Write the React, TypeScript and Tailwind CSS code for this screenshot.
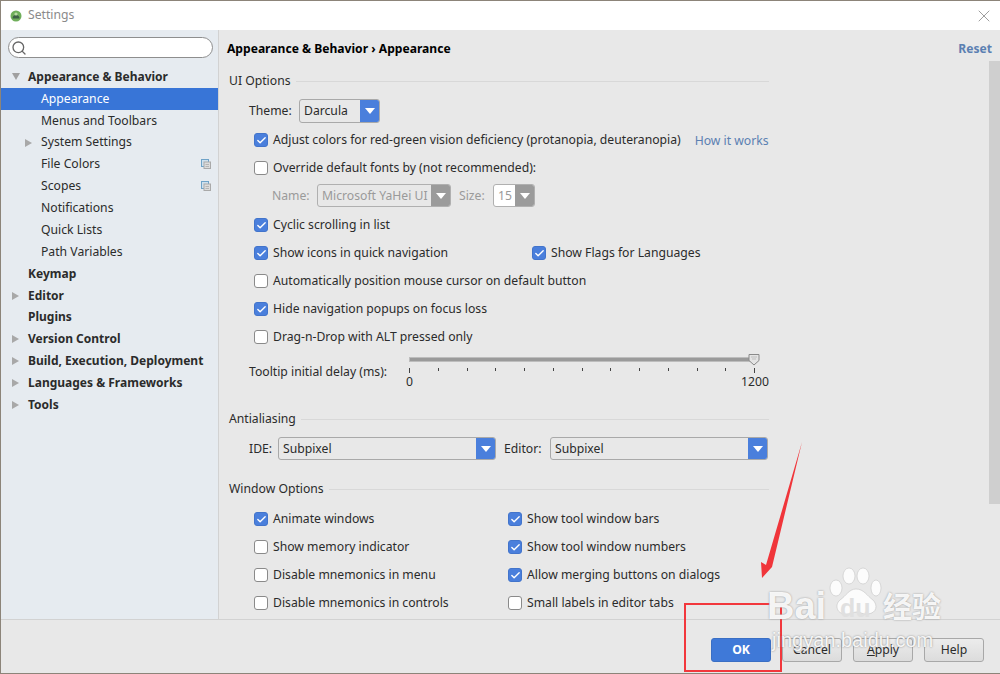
import React from 'react';
import { Search, Check, X } from 'lucide-react';

const tree = [
  { label: 'Appearance & Behavior', bold: true, arrow: 'down', indent: 28 },
  { label: 'Appearance', selected: true, indent: 41 },
  { label: 'Menus and Toolbars', indent: 41 },
  { label: 'System Settings', arrow: 'right', indent: 41 },
  { label: 'File Colors', copy: true, indent: 41 },
  { label: 'Scopes', copy: true, indent: 41 },
  { label: 'Notifications', indent: 41 },
  { label: 'Quick Lists', indent: 41 },
  { label: 'Path Variables', indent: 41 },
  { label: 'Keymap', bold: true, indent: 28 },
  { label: 'Editor', bold: true, arrow: 'right', indent: 28 },
  { label: 'Plugins', bold: true, indent: 28 },
  { label: 'Version Control', bold: true, arrow: 'right', indent: 28 },
  { label: 'Build, Execution, Deployment', bold: true, arrow: 'right', indent: 28 },
  { label: 'Languages & Frameworks', bold: true, arrow: 'right', indent: 28 },
  { label: 'Tools', bold: true, arrow: 'right', indent: 28 },
];

function TreeRow({ item }: { item: any }) {
  return (
    <div className={item.selected ? 'relative flex items-center h-[21.87px] bg-[#3875d7] text-white' : 'relative flex items-center h-[21.87px] text-[#2b2b2b]'} style={{ paddingLeft: item.indent - 1 }}>
      {item.arrow === 'down' && <div className="absolute left-[11px] top-[7px] w-0 h-0 border-l-[4px] border-r-[4px] border-t-[7px] border-l-transparent border-r-transparent border-t-[#a0a0a0]" />}
      {item.arrow === 'right' && <div className="absolute w-0 h-0 border-t-[4px] border-b-[4px] border-l-[7px] border-t-transparent border-b-transparent border-l-[#a8a8a8]" style={{ left: item.indent === 41 ? 24 : 11, top: 7 }} />}
      <span className={item.bold ? 'font-bold text-[12px]' : ''}>{item.label}</span>
      {item.copy && <CopyIcon />}
    </div>
  );
}

function CopyIcon() {
  return (
    <svg className="absolute left-[200px] top-[6px]" width="10" height="10" viewBox="0 0 10 10" fill="none">
      <rect x="0.5" y="0.5" width="7" height="7" fill="#cfe1ee" stroke="#6fa3c8" />
      <rect x="3" y="3" width="6.5" height="6.5" fill="#dcdcdc" stroke="#a9a9a9" />
      <path d="M4.500 5.500h3.500M4.500 7.500h3.500" stroke="#b5b5b5" />
    </svg>
  );
}

function Box({ on }: { on?: boolean }) {
  return on ? (
    <span className="flex items-center justify-center w-[14px] h-[14px] shrink-0 rounded-[3px] bg-[#4a7fdc] border border-[#4274cb]">
      <Check size={11} strokeWidth={3} className="text-white" />
    </span>
  ) : (
    <span className="block w-[14px] h-[14px] shrink-0 rounded-[3px] bg-white border border-[#8a8a8a]" />
  );
}

function CheckRow({ on, label, className = '' }: { on?: boolean; label: string; className?: string }) {
  return (
    <div className={'flex items-center gap-[5px] h-[20px] ' + className}>
      <Box on={on} />
      <span className="mt-px">{label}</span>
    </div>
  );
}

function Combo({ value, w, h = 'h-[23px]', gray, white }: { value: string; w: string; h?: string; gray?: boolean; white?: boolean }) {
  return (
    <div className={'flex overflow-hidden rounded-[3px] border ' + w + ' ' + h + (gray ? ' border-[#b0b0b0]' : ' border-[#a9a9a9]') + (white ? ' bg-white' : '')}>
      <span className={'flex-1 pl-[4px] leading-[22px] whitespace-nowrap overflow-hidden ' + (gray ? 'text-[#9a9a9a]' : 'text-[#2b2b2b]')}>{value}</span>
      <span className={'flex items-center justify-center w-[19px] shrink-0 ' + (gray ? 'bg-[#9b9b9b]' : 'bg-[#4a7fdc]')}>
        <span className="w-0 h-0 border-l-[5px] border-r-[5px] border-t-[6px] border-l-transparent border-r-transparent border-t-white" />
      </span>
    </div>
  );
}

function GroupTitle({ title, className = '' }: { title: string; className?: string }) {
  return (
    <div className={'flex items-center gap-[5px] h-[20px] ' + className}>
      <span className="mt-px">{title}</span>
      <div className="flex-1 h-px bg-[#d8d8d8]" />
    </div>
  );
}

function Btn({ children, primary }: { children: React.ReactNode; primary?: boolean }) {
  return (
    <div className={primary
      ? 'flex items-center justify-center w-[60px] h-[24px] rounded-[3px] bg-[#3f79d8] border border-[#3a6fc4] text-white font-bold'
      : 'flex items-center justify-center w-[60px] h-[24px] rounded-[3px] bg-gradient-to-b from-[#ececec] to-[#dcdcdc] border border-[#a8a8a8] text-[#2b2b2b]'}>
      {children}
    </div>
  );
}

function Slider() {
  const ticks = Array.from({ length: 13 });
  return (
    <div className="relative w-[360px] h-[40px]">
      <div className="absolute left-0 top-[4px] w-[345px] h-[5px] bg-[#9a9a9a] border border-[#bdbdbd]" />
      <svg className="absolute left-[339px] top-0" width="12" height="13" viewBox="0 0 12 13">
        <path d="M1 1.500h10v6l-5 4.500-5-4.500z" fill="#e4e4e4" stroke="#8a8a8a" />
        <path d="M3.500 4h1M5.500 4h1M7.500 4h1M4.500 6h1M6.500 6h1" stroke="#9a9a9a" />
      </svg>
      <div className="absolute left-0 top-[15px] w-[346px] flex justify-between">
        {ticks.map((_, i) => (
          <div key={i} className={i === 0 || i === 12 ? 'w-px h-[5px] bg-[#444]' : 'w-px h-[3px] bg-[#444]'} />
        ))}
      </div>
      <span className="absolute left-[-3px] top-[20px] leading-[18px]">0</span>
      <span className="absolute left-[332px] top-[20px] leading-[18px]">1200</span>
    </div>
  );
}

function Overlays() {
  return (
    <>
      <svg className="absolute left-[750px] top-[435px]" width="60" height="150" viewBox="0 0 60 150">
        <path d="M52 7 L22 132 L12 143 L11 127 L16 130 Z" fill="#f0353a" />
      </svg>
      <div className="absolute left-[684px] top-[603px] w-[98px] h-[69px] border-[2px] border-[#f2373c]" />
      <svg className="absolute left-[826px] top-[566px]" width="58" height="58" viewBox="0 0 58 58" fill="#ffffff" fillOpacity="0.85" stroke="#c4c4c4" strokeWidth="0.6">
        <ellipse cx="10" cy="22" rx="6" ry="8" />
        <ellipse cx="23" cy="10" rx="6" ry="8" />
        <ellipse cx="37" cy="10" rx="6" ry="8" />
        <ellipse cx="50" cy="22" rx="5" ry="8" />
        <path d="M30 23c-7 0-10 7-16 11-6 5-3 15 7 14 5 0 6-2 10-2s6 3 11 2c9-1 10-9 5-14-6-4-9-11-17-11z" />
      </svg>
      <span className="absolute left-[767px] top-[584px] text-[38px] leading-[44px] font-bold text-white/90 [text-shadow:0_0_2px_#8f8f8f] font-['Liberation_Sans',sans-serif]">Bai</span>
      <span className="absolute left-[840px] top-[593px] text-[25px] leading-[30px] font-bold text-[#e0e0e0] font-['Liberation_Sans',sans-serif]">du</span>
      <span className="absolute left-[883px] top-[587px] text-[29px] leading-[36px] font-bold text-white/90 [text-shadow:0_0_2px_#8f8f8f] font-['Noto_Sans_CJK_SC',sans-serif]">经验</span>
      <span className="absolute left-[772px] top-[628px] text-[20px] leading-[24px] text-white/90 [text-shadow:0_0_2px_#7f7f7f] font-['Liberation_Sans',sans-serif]">jingyan.baidu.com</span>
    </>
  );
}

export default function App() {
  return (
    <div className="relative w-[1000px] h-[674px] overflow-hidden bg-[#8c8479] pl-px pt-px font-['Noto_Sans',sans-serif] text-[12.2px] text-[#2b2b2b]">
      <div className="flex flex-col h-[672px] w-[999px]">
        <div className="flex items-center h-[29px] bg-white shrink-0 pl-[9px]">
          <svg width="12" height="12" viewBox="0 0 12 12">
            <circle cx="6" cy="6" r="5.500" fill="#6fae5a" />
            <path d="M2.500 8.500a3.500 3.500 0 0 1 7 0z" fill="#3d5f45" />
            <circle cx="6" cy="4" r="1.600" fill="#b9d9a5" />
          </svg>
          <span className="ml-[6px] text-[#8a8a8a]">Settings</span>
          <X size={20} strokeWidth={1} className="ml-auto mr-[6px] text-[#8a8a8a]" />
        </div>
        <div className="flex flex-1 min-h-0">
          <div className="w-[218px] shrink-0 bg-[#e6ebf0] border-r border-[#d2d2d2] pt-[7px]">
            <div className="flex items-center mx-[7px] h-[21px] w-[205px] rounded-full bg-white border border-[#8e8e8e] pl-[2px]">
              <Search size={16} strokeWidth={2} className="text-[#666]" />
            </div>
            <div className="mt-[8px]">
              {tree.map((item) => <TreeRow key={item.label} item={item} />)}
            </div>
          </div>
          <div className="relative flex-1 bg-[#e8e8e8] pl-[10px] pr-[231px] pt-[9px]">
            <div className="-ml-[2px] h-[20px] leading-[20px] font-bold text-[12.1px] text-black whitespace-nowrap">
              Appearance &amp; Behavior › Appearance
            </div>
            <span className="absolute right-[8px] top-[9px] leading-[20px] font-bold text-[12.1px] text-[#5b80b2]">Reset</span>
            <div className="absolute right-0 top-[31px] w-[11px] h-[443px] bg-[#cfcfcf]" />

            <GroupTitle title="UI Options" className="mt-[12px]" />
            <div className="pl-[20px]">
              <div className="flex items-center h-[24px] mt-[8px]">
                <span className="w-[50px] mt-px">Theme:</span>
                <Combo value="Darcula" w="w-[81px]" h="h-[24px]" />
              </div>
              <div className="mt-[7px] pl-[5px]">
                <div className="flex items-center h-[20px] whitespace-nowrap">
                  <CheckRow on label="Adjust colors for red-green vision deficiency (protanopia, deuteranopia)" />
                  <span className="ml-[14px] mt-px leading-[18px] text-[#5b80b2]">How it works</span>
                </div>
                <CheckRow label="Override default fonts by (not recommended):" className="mt-[8px]" />
                <div className="flex items-center h-[23px] mt-[6px] pl-[18px] text-[#9a9a9a]">
                  <span className="w-[45px] mt-px">Name:</span>
                  <Combo value="Microsoft YaHei UI" w="w-[134px]" gray />
                  <span className="ml-[8px] w-[34px] mt-px">Size:</span>
                  <Combo value="15" w="w-[42px]" gray white />
                </div>
                <CheckRow on label="Cyclic scrolling in list" className="mt-[8px]" />
                <div className="flex mt-[8px] whitespace-nowrap">
                  <CheckRow on label="Show icons in quick navigation" className="w-[278px]" />
                  <CheckRow on label="Show Flags for Languages" />
                </div>
                <CheckRow label="Automatically position mouse cursor on default button" className="mt-[8px]" />
                <CheckRow on label="Hide navigation popups on focus loss" className="mt-[8px]" />
                <CheckRow label="Drag-n-Drop with ALT pressed only" className="mt-[8px]" />
              </div>
              <div className="flex mt-[6px]">
                <span className="w-[160px] pt-[9px] leading-[20px]">Tooltip initial delay (ms):</span>
                <Slider />
              </div>
            </div>

            <GroupTitle title="Antialiasing" className="mt-[16px]" />
            <div className="flex items-center pl-[20px] mt-[8px] h-[23px]">
              <span className="w-[29px] mt-px">IDE:</span>
              <Combo value="Subpixel" w="w-[218px]" />
              <span className="ml-[8px] w-[46px] mt-px">Editor:</span>
              <Combo value="Subpixel" w="w-[218px]" />
            </div>

            <GroupTitle title="Window Options" className="mt-[19px]" />
            <div className="grid grid-cols-[254px_254px] pl-[25px] mt-[10px] gap-y-[8px] whitespace-nowrap">
              <CheckRow on label="Animate windows" />
              <CheckRow on label="Show tool window bars" />
              <CheckRow label="Show memory indicator" />
              <CheckRow on label="Show tool window numbers" />
              <CheckRow label="Disable mnemonics in menu" />
              <CheckRow on label="Allow merging buttons on dialogs" />
              <CheckRow label="Disable mnemonics in controls" />
              <CheckRow label="Small labels in editor tabs" />
            </div>
          </div>
        </div>
        <div className="flex items-center justify-end gap-[11px] h-[54px] shrink-0 bg-[#e8e8e8] border-t border-[#d2d2d2] pr-[16px] pt-[7px]">
          <Btn primary>OK</Btn>
          <Btn>Cancel</Btn>
          <Btn><span><u>A</u>pply</span></Btn>
          <Btn>Help</Btn>
        </div>
      </div>
      <Overlays />
    </div>
  );
}
